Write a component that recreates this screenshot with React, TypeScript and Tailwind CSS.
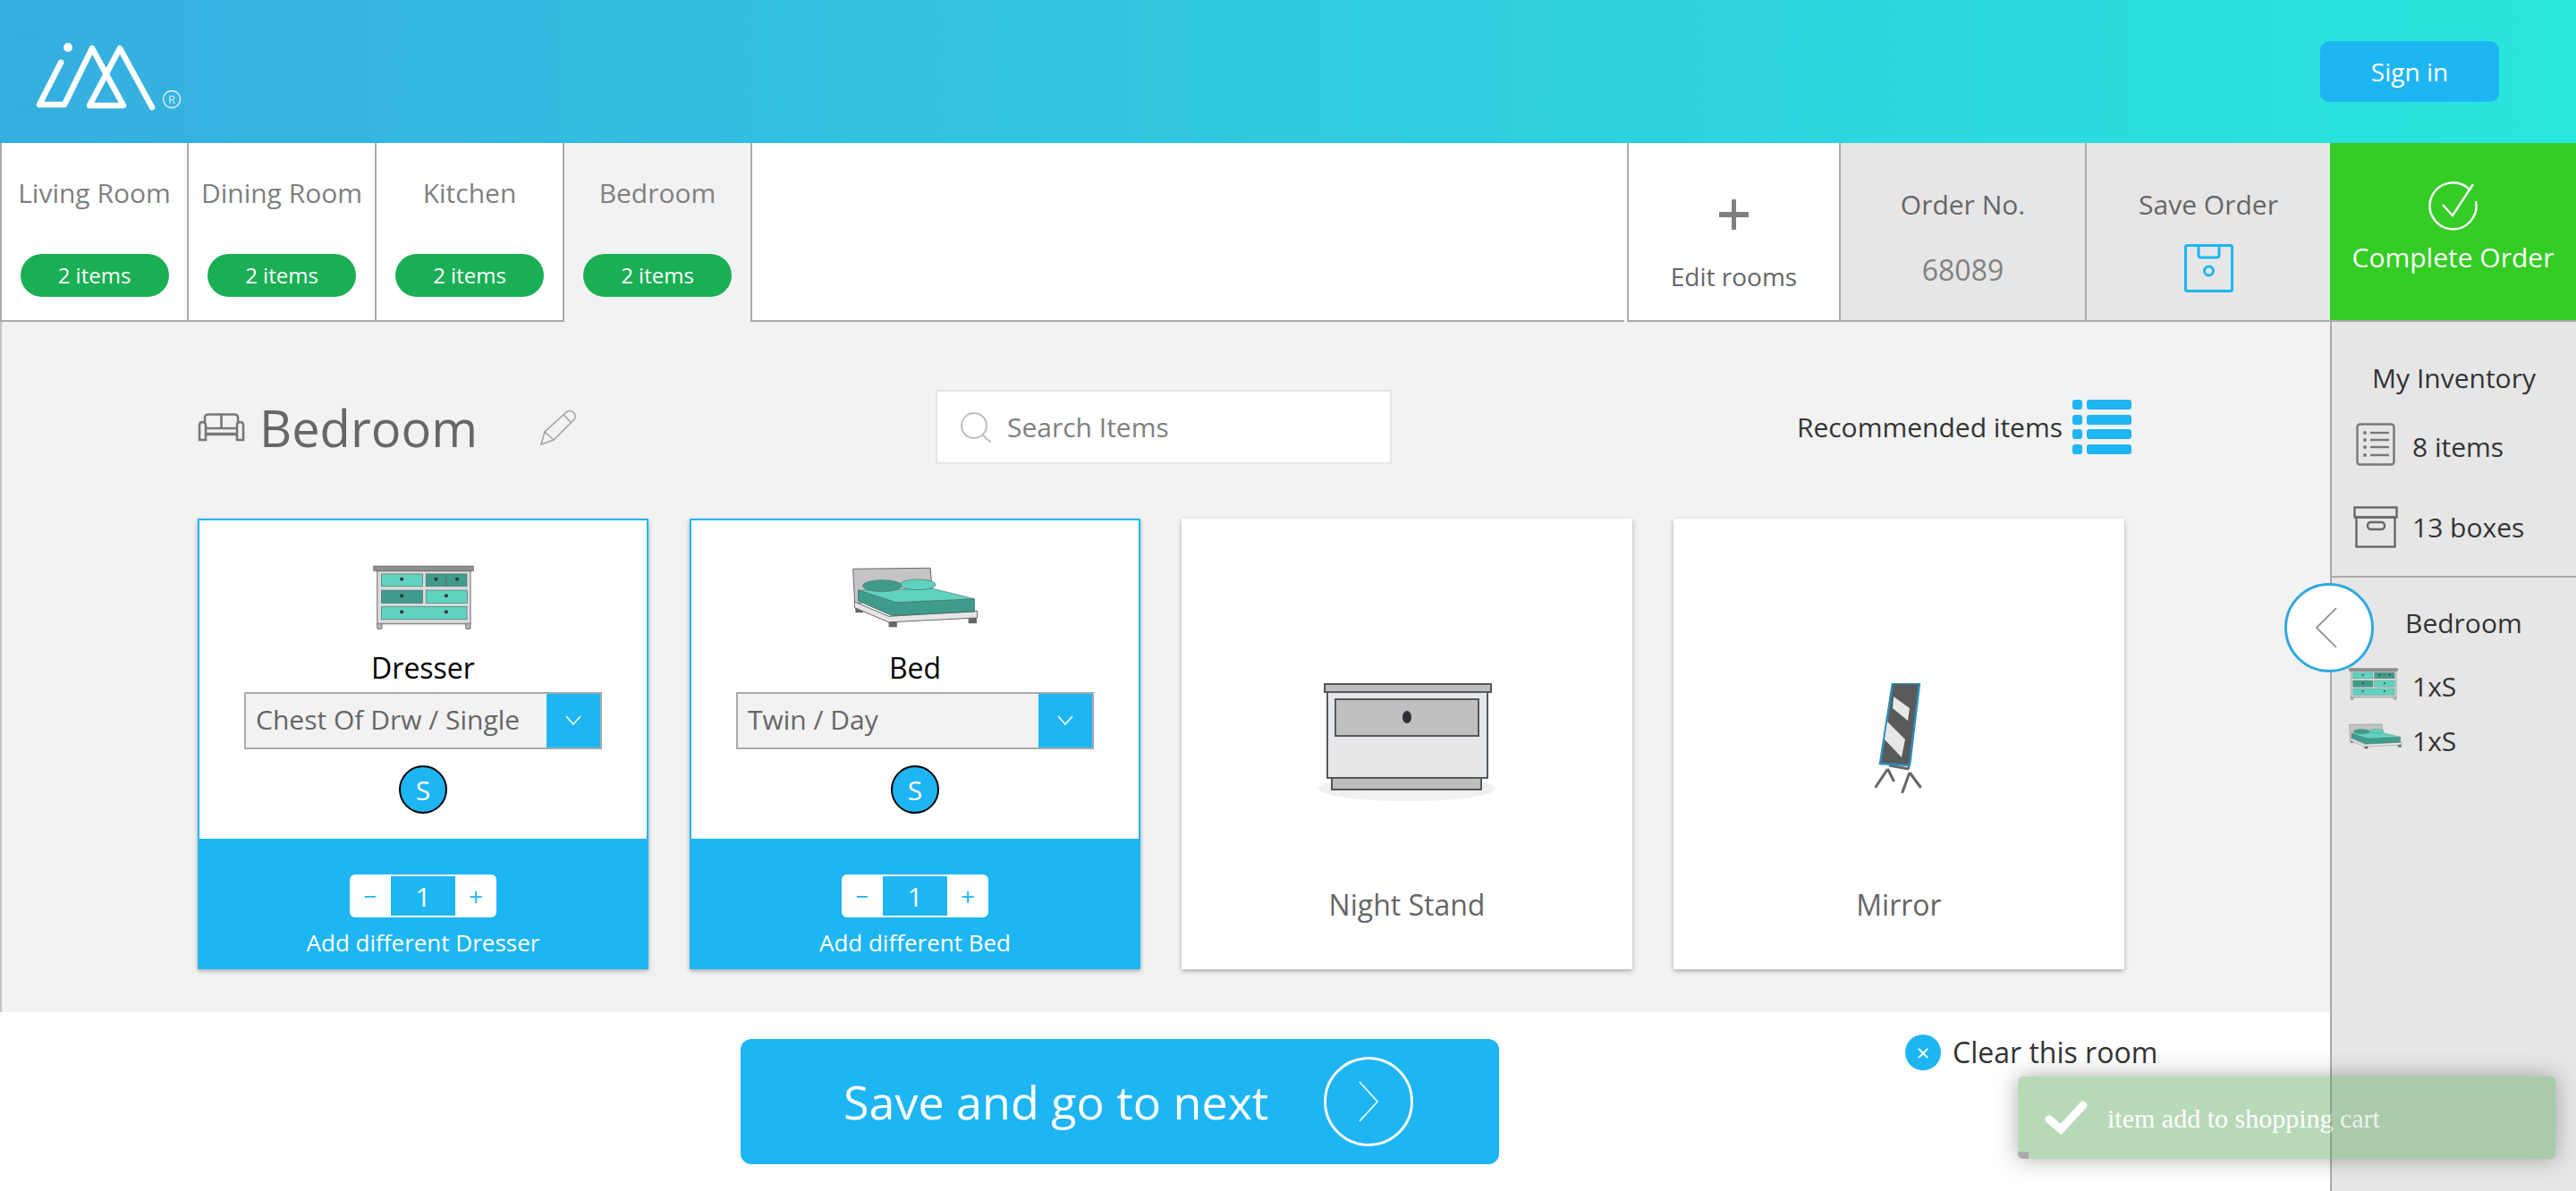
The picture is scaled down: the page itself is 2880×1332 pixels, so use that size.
import React from "react";

function Logo() {
  return (
    <svg width="210" height="110" viewBox="0 0 210 110" className="text-white">
      <circle cx="76" cy="28" r="5" fill="currentColor" />
      <path
        d="M68 45 L44 92 L72 92 L103 29 L138 93 L100 93 L134 29 L170 95"
        fill="none"
        stroke="currentColor"
        strokeWidth="6.5"
        strokeLinecap="round"
        strokeLinejoin="round"
      />
      <circle cx="192" cy="86" r="9.5" fill="none" stroke="#d6f1fa" strokeWidth="1.5" />
      <text x="192" y="91" textAnchor="middle" fontSize="13" fill="#d6f1fa" fontFamily="Open Sans">
        R
      </text>
    </svg>
  );
}

function DresserImg({ w, h }: { w: number; h: number }) {
  const drawers = [
    [78, 95, 138, 42, "#5fd3bf"],
    [227, 95, 68, 42, "#3f9c8c"],
    [296, 95, 68, 42, "#3f9c8c"],
    [78, 150, 138, 44, "#3f9c8c"],
    [227, 150, 138, 44, "#5fd3bf"],
    [78, 205, 286, 44, "#5fd3bf"],
  ] as const;
  const knobs = [
    [146, 113],
    [261, 113],
    [331, 113],
    [146, 169],
    [295, 169],
    [146, 223],
    [295, 223],
  ];
  return (
    <svg width={w} height={h} viewBox="50 65 338 218" preserveAspectRatio="none">
      <path d="M64 260 V276 Q64 282 72 282 Q80 282 80 276 V264 H360 V276 Q360 282 368 282 Q376 282 376 276 V260 Z" fill="#b5b5b5" stroke="#777" strokeWidth="3" />
      <rect x="64" y="85" width="312" height="178" fill="#dcdcdc" stroke="#8a8a8a" strokeWidth="4" />
      <rect x="52" y="68" width="334" height="17" fill="#8f8f8f" stroke="#666" strokeWidth="2" />
      {drawers.map(([x, y, dw, dh, c], i) => (
        <rect key={i} x={x} y={y} width={dw} height={dh} fill={c} stroke="#4d6f69" strokeWidth="2" />
      ))}
      {knobs.map(([cx, cy], i) => (
        <circle key={i} cx={cx} cy={cy} r="6" fill="#333" />
      ))}
    </svg>
  );
}

function BedImg({ w, h }: { w: number; h: number }) {
  return (
    <svg width={w} height={h} viewBox="65 65 430 215" preserveAspectRatio="none">
      <path d="M70 75 L330 72 L336 150 L76 195 Z" fill="#c4c4c4" stroke="#666" strokeWidth="3" />
      <rect x="78" y="205" width="26" height="20" fill="#666" />
      <rect x="190" y="250" width="28" height="25" fill="#666" />
      <rect x="458" y="240" width="28" height="22" fill="#666" />
      <path d="M75 188 L190 238 L488 220 V243 L190 258 L75 208 Z" fill="#e6e6e6" stroke="#666" strokeWidth="3" />
      <path d="M88 148 L88 185 L200 235 L478 222 L478 178 L215 188 Z" fill="#3f9c8c" stroke="#4d6f69" strokeWidth="3" />
      <path d="M88 148 L340 143 L478 178 L215 190 Z" fill="#5fd3bf" stroke="#4d6f69" strokeWidth="2" />
      <ellipse cx="288" cy="129" rx="60" ry="18" fill="#5fd3bf" stroke="#4d6f69" strokeWidth="2" />
      <ellipse cx="168" cy="133" rx="65" ry="20" fill="#3f9c8c" stroke="#4d6f69" strokeWidth="2" />
    </svg>
  );
}

function NightStandImg() {
  return (
    <svg width="198" height="132" viewBox="0 0 198 132">
      <ellipse cx="99" cy="118" rx="99" ry="14" fill="#f0f0f1" />
      <rect x="15" y="106" width="167" height="13" fill="#bdbdbd" stroke="#55575c" strokeWidth="2" />
      <rect x="10" y="10" width="179" height="96" fill="#e6e7e9" stroke="#55575c" strokeWidth="2" />
      <rect x="7" y="1" width="186" height="9" fill="#bdbdbd" stroke="#55575c" strokeWidth="2" />
      <rect x="19" y="18" width="160" height="41" fill="#c0c0c0" stroke="#55575c" strokeWidth="2" />
      <ellipse cx="99" cy="38" rx="5" ry="7" fill="#2e3035" />
    </svg>
  );
}

function MirrorImg() {
  return (
    <svg width="54" height="123" viewBox="0 0 54 123">
      <path d="M37 42 L38 96" stroke="#55575c" strokeWidth="2" />
      <path d="M14.5 96 L0.5 117 M14.5 96 L21.5 110 M39 100 L30.6 123 M39 100 L51.6 117 M16 92 L38 96" stroke="#666" strokeWidth="3" fill="none" />
      <path d="M20 0 L50 0 L39 92 L6 90 Z" fill="#58595b" stroke="#2b8db8" strokeWidth="2.5" />
      <path d="M21 15 L39 28 L37 42 L20 28 Z" fill="#e6e7e8" />
      <path d="M14 43 L34 63 L30 83 L11 63 Z" fill="#e6e7e8" />
    </svg>
  );
}

function SofaIcon() {
  return (
    <svg width="53" height="32" viewBox="0 0 53 32" fill="none" stroke="#777" strokeWidth="2.6">
      <path d="M8 12 V5 Q8 1.5 12 1.5 H41 Q45 1.5 45 5 V12" />
      <path d="M26.5 1.5 V17" />
      <path d="M8 17 H45" />
      <path d="M2 30 V14 Q2 10 5.5 10 Q9 10 9 14 V23 H44 V14 Q44 10 47.5 10 Q51 10 51 14 V30 H44 V24 H9 V30 Z" />
    </svg>
  );
}

function PencilIcon() {
  return (
    <svg width="41" height="40" viewBox="0 0 41 40" fill="none" stroke="#a3a3a3" strokeWidth="1.6">
      <path d="M1 39 L5 25 L29 3 Q33 0 37 3 Q41 7 38 11 L15 34 Z M5 25 L15 34 M26 6 L35 15" />
    </svg>
  );
}

function SearchIcon() {
  return (
    <svg width="35" height="34" viewBox="0 0 35 34" fill="none" stroke="#bdbdbd" strokeWidth="2">
      <circle cx="15" cy="15" r="14" />
      <path d="M25 26 L33 33" strokeLinecap="round" />
    </svg>
  );
}

function RecommendedIcon() {
  return (
    <div className="flex flex-col gap-[5.5px]">
      {[0, 1, 2, 3].map((i) => (
        <div key={i} className="flex gap-[5px]">
          <span className="w-[11px] h-[11px] rounded-[3px] bg-[#1eb5f3]" />
          <span className="w-[50px] h-[11px] rounded-[3px] bg-[#1eb5f3]" />
        </div>
      ))}
    </div>
  );
}

function Tab({ name, active, first }: { name: string; active?: boolean; first?: boolean }) {
  return (
    <div
      className={`flex flex-col items-center pt-[35px] border-r-2 border-[#aaaaaa] ${first ? "w-[211px] border-l-2" : "w-[210px]"} ${active ? "bg-[#f2f2f2]" : "bg-white border-b-2"}`}
    >
      <span className="text-[30px] leading-[42px] text-[#808080]">{name}</span>
      <span className="mt-[47px] w-[166px] h-[48px] rounded-full bg-[#1aaf55] text-white text-[24px] flex items-center justify-center">
        2 items
      </span>
    </div>
  );
}

function Stepper() {
  return (
    <div className="w-[164px] h-[48px] rounded-[6px] bg-white flex items-center text-[#1eb5f3]">
      <span className="w-[46px] text-center text-[26px] leading-none">−</span>
      <span className="w-[72px] h-[44px] bg-[#1eb5f3] text-white text-[30px] flex items-center justify-center">1</span>
      <span className="w-[46px] text-center text-[28px] leading-none">+</span>
    </div>
  );
}

function SelectedCard({ name, option, image }: { name: string; option: string; image: React.ReactNode }) {
  return (
    <div className="w-[504px] h-[504px] flex flex-col items-center bg-white border-2 border-[#1eb5f3] shadow-[0_2px_5px_rgba(0,0,0,0.3)]">
      <div className="mt-[50px] h-[72px] flex items-center">{image}</div>
      <div className="mt-[22px] text-[32px] leading-[42px] text-black">{name}</div>
      <div className="mt-[6px] w-[400px] h-[64px] flex border-2 border-[#aaaaaa] bg-[#f2f2f2]">
        <span className="flex-1 pl-[11px] text-[30px] leading-[58px] text-[#666666]">{option}</span>
        <span className="w-[60px] bg-[#1eb5f3] flex items-center justify-center">
          <svg width="18" height="12" viewBox="0 0 18 12" fill="none" stroke="#fff" strokeWidth="1.6">
            <path d="M1 1 L9 10 L17 1" />
          </svg>
        </span>
      </div>
      <div className="mt-[18px] w-[54px] h-[54px] rounded-full bg-[#1eb5f3] border-2 border-black text-white text-[30px] flex items-center justify-center">
        S
      </div>
      <div className="mt-auto w-full h-[144px] bg-[#1eb5f3] flex flex-col items-center pt-[40px]">
        <Stepper />
        <div className="mt-[10px] text-[26px] leading-[36px] text-white">Add different {name}</div>
      </div>
    </div>
  );
}

function PlainCard({ name, image }: { name: string; image: React.ReactNode }) {
  return (
    <div className="w-[504px] h-[504px] flex flex-col items-center bg-white shadow-[0_2px_5px_rgba(0,0,0,0.3)]">
      <div className="mt-[184px] h-[132px]">{image}</div>
      <div className="mt-[95px] text-[32px] leading-[42px] text-[#666666]">{name}</div>
    </div>
  );
}

export default function App() {
  return (
    <div className="relative w-[2880px] h-[1332px] overflow-hidden bg-white font-['Open_Sans',sans-serif]">
      {/* Header */}
      <header className="h-[160px] flex items-center justify-between pr-[86px] bg-linear-to-r from-[#36aee0] to-[#29e6dc]">
        <Logo />
        <button className="w-[200px] h-[68px] rounded-[10px] bg-[#1eb5f3] text-white text-[28px]">Sign in</button>
      </header>

      <div className="flex h-[1172px]">
        <div className="w-[2605px] flex flex-col">
          {/* Tabs + order actions */}
          <div className="h-[200px] flex">
            <Tab name="Living Room" first />
            <Tab name="Dining Room" />
            <Tab name="Kitchen" />
            <Tab name="Bedroom" active />
            <div className="flex-1 mr-[3px] bg-white border-b-2 border-[#aaaaaa]" />
            <div className="w-[237px] flex flex-col items-center bg-white border-l-2 border-b-2 border-[#aaaaaa]">
              <svg width="33" height="34" viewBox="0 0 33 34" className="mt-[63px]" fill="#808080">
                <rect x="14" y="0" width="5" height="34" />
                <rect x="0" y="14" width="33" height="6" />
              </svg>
              <span className="mt-[32px] text-[28px] leading-[40px] text-[#666666]">Edit rooms</span>
            </div>
            <div className="w-[275px] flex flex-col items-center bg-[#e6e6e6] border-l-2 border-b-2 border-[#aaaaaa] pt-[48px]">
              <span className="text-[30px] leading-[42px] text-[#666666]">Order No.</span>
              <span className="mt-[31px] text-[32px] leading-[42px] text-[#808080]">68089</span>
            </div>
            <div className="w-[274px] flex flex-col items-center bg-[#e6e6e6] border-l-2 border-b-2 border-[#aaaaaa] pt-[48px]">
              <span className="text-[30px] leading-[42px] text-[#666666]">Save Order</span>
              <svg width="55" height="54" viewBox="0 0 55 54" className="mt-[23px]" fill="none" stroke="#1eb5f3" strokeWidth="3">
                <rect x="1.5" y="1.5" width="52" height="51" rx="2" />
                <path d="M16 1.5 V12 Q16 15 19 15 H36 Q39 15 39 12 V1.5" />
                <circle cx="27.5" cy="30" r="5" />
              </svg>
            </div>
          </div>

          {/* Room content */}
          <main className="h-[772px] bg-[#f2f2f2] border-l-2 border-[#c4c4c4] pl-[219px] pt-[76px]">
            <div className="w-[2162px] h-[83px] flex items-center">
              <div className="w-[825px] flex items-center">
                <SofaIcon />
                <h1 className="ml-[16px] text-[56px] leading-none text-[#666666] font-normal">Bedroom</h1>
                <span className="ml-[70px]">
                  <PencilIcon />
                </span>
              </div>
              <div className="w-[510px] h-[83px] flex items-center bg-white border-2 border-[#e6e6e6] pl-[26px]">
                <SearchIcon />
                <span className="ml-[17px] text-[30px] text-[#808080]">Search Items</span>
              </div>
              <div className="flex-1 flex items-center justify-end gap-[11px]">
                <span className="text-[30px] text-[#333333]">Recommended items</span>
                <RecommendedIcon />
              </div>
            </div>

            <div className="mt-[61px] flex gap-[46px]">
              <SelectedCard name="Dresser" option="Chest Of Drw / Single" image={<DresserImg w={113} h={72} />} />
              <SelectedCard name="Bed" option="Twin / Day" image={<BedImg w={143} h={70} />} />
              <PlainCard name="Night Stand" image={<NightStandImg />} />
              <PlainCard name="Mirror" image={<MirrorImg />} />
            </div>
          </main>

          {/* Footer actions */}
          <div className="flex-1 flex items-start pl-[828px]">
            <button className="mt-[30px] w-[848px] h-[140px] rounded-[12px] bg-[#1eb5f3] text-white flex items-center pl-[115px]">
              <span className="text-[52px] leading-none">Save and go to next</span>
              <span className="ml-[62px] w-[100px] h-[100px] rounded-full border-[3px] border-white flex items-center justify-center">
                <svg width="24" height="46" viewBox="0 0 24 46" fill="none" stroke="#fff" strokeWidth="1.6">
                  <path d="M2 1 L22 23 L2 45" />
                </svg>
              </span>
            </button>
            <div className="mt-[21px] ml-[454px] flex items-center gap-[13px]">
              <span className="w-[40px] h-[40px] rounded-full bg-[#1eb5f3] text-white text-[26px] leading-none flex items-center justify-center">
                ×
              </span>
              <span className="text-[32px] text-[#333333]">Clear this room</span>
            </div>
          </div>
        </div>

        {/* Inventory sidebar */}
        <aside className="w-[275px] flex flex-col bg-[#e6e6e6]">
          <div className="h-[200px] shrink-0 bg-[#34cc25] border-b-2 border-[#aaaaaa] flex flex-col items-center pt-[43px]">
            <svg width="56" height="55" viewBox="0 0 56 55" fill="none" stroke="#fff" strokeWidth="2.4">
              <path d="M45 8 A26 26 0 1 0 53 22" />
              <path d="M16 26 L27 38 L50 3" />
            </svg>
            <span className="mt-[9px] text-[30px] leading-[42px] font-medium text-white">Complete Order</span>
          </div>
          <div className="flex-1 border-l-2 border-[#aaaaaa]">
            <div className="h-[286px] border-b-2 border-[#aaaaaa] pt-[42px]">
              <div className="text-center text-[30px] leading-[42px] text-[#333333]">My Inventory</div>
              <div className="mt-[29px] pl-[27px] flex items-center gap-[19px] h-[48px]">
                <svg width="44" height="48" viewBox="0 0 44 48" fill="none" stroke="#777" strokeWidth="2.4">
                  <rect x="1.5" y="1.5" width="41" height="45" rx="3" />
                  {[11, 19, 27, 36].map((y) => (
                    <g key={y}>
                      <circle cx="10" cy={y} r="2" fill="#777" stroke="none" />
                      <path d="M17 ${y}" />
                      <line x1="16" y1={y} x2="37" y2={y} />
                    </g>
                  ))}
                </svg>
                <span className="text-[30px] leading-[42px] pt-[6px] text-[#333333]">8 items</span>
              </div>
              <div className="mt-[45px] pl-[24px] flex items-center gap-[16px] h-[46px]">
                <svg width="50" height="47" viewBox="0 0 50 47" fill="none" stroke="#666" strokeWidth="2.4">
                  <rect x="1.5" y="1.5" width="47" height="11" />
                  <rect x="3.5" y="12.5" width="43" height="33" />
                  <rect x="16" y="18" width="19" height="8" rx="3.5" />
                </svg>
                <span className="text-[30px] leading-[42px] pt-[2px] text-[#333333]">13 boxes</span>
              </div>
            </div>
            <div className="pt-[30px]">
              <div className="pl-[82px] text-[30px] leading-[42px] text-[#333333]">Bedroom</div>
              <div className="mt-[29px] pl-[19px] flex items-start h-[40px]">
                <span className="w-[71px] shrink-0">
                  <DresserImg w={55} h={36} />
                </span>
                <span className="text-[30px] leading-[42px] text-[#333333]">1xS</span>
              </div>
              <div className="mt-[22px] pl-[19px] flex items-start">
                <span className="w-[71px] shrink-0">
                  <BedImg w={60} h={29} />
                </span>
                <span className="text-[30px] leading-[42px] -mt-[1px] text-[#333333]">1xS</span>
              </div>
            </div>
          </div>
        </aside>
      </div>

      {/* Sidebar toggle */}
      <button className="absolute left-[2554px] top-[652px] w-[100px] h-[100px] rounded-full bg-white border-[3px] border-[#2fa8e0] flex items-center justify-center">
        <svg width="26" height="46" viewBox="0 0 26 46" fill="none" stroke="#808080" strokeWidth="1.6" className="-ml-[6px]">
          <path d="M24 1 L2 23 L24 45" />
        </svg>
      </button>

      {/* Toast */}
      <div className="absolute left-[2256px] top-[1204px] w-[601px] h-[92px] rounded-[6px] overflow-hidden bg-[#51a351] opacity-40 shadow-[0_0_24px_#333] flex items-center pl-[30px]">
        <svg width="48" height="38" viewBox="0 0 48 38" fill="none" stroke="#fff" strokeWidth="9" strokeLinecap="round">
          <path d="M5 21 L18 32 L43 5" />
        </svg>
        <span className="ml-[22px] text-[30px] text-white font-['Liberation_Serif',serif]">item add to shopping cart</span>
        <span className="absolute left-0 bottom-0 w-[12px] h-[8px] bg-[#333333]" />
      </div>
    </div>
  );
}
